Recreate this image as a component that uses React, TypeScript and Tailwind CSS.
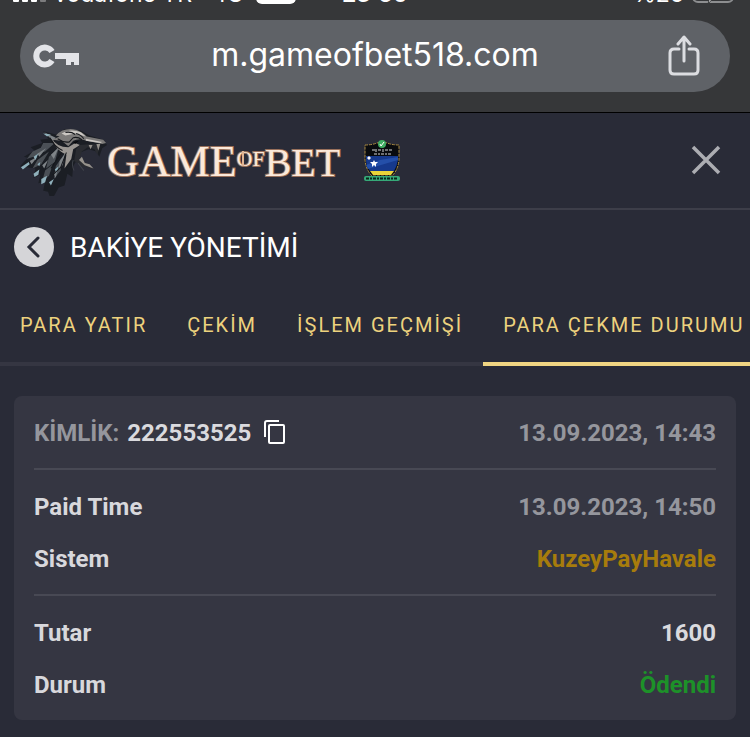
import React, { useState } from 'react';

const TABS = ['PARA YATIR', 'ÇEKİM', 'İŞLEM GEÇMİŞİ', 'PARA ÇEKME DURUMU'];

// Mostly scrolled out of view, only the bottom edge stays visible
const StatusBar: React.FC = () => (
  <div className="flex h-5 items-end overflow-hidden text-white font-['Inter','Liberation_Sans',sans-serif] text-[23px] leading-7">
    <div className="grid w-full grid-cols-[1fr_auto_1fr] items-end px-3 pb-3">
      <div className="flex items-end gap-2 whitespace-nowrap">
        <svg width="34" height="24" viewBox="0 0 34 24" fill="currentColor" className="mb-1">
          <rect x="1" y="14" width="6" height="8" rx="1" />
          <rect x="10" y="10" width="6" height="12" rx="1" />
          <rect x="19" y="5" width="6" height="17" rx="1" />
          <rect x="28" y="0" width="6" height="22" rx="1" opacity=".35" />
        </svg>
        <span>vodafone TR</span>
        <span className="pl-3">4G</span>
        <span className="ml-1 mb-1 h-6 w-10 rounded-md bg-white" />
      </div>
      <span className="font-semibold">23:50</span>
      <div className="flex items-end justify-end gap-2">
        <span>%26</span>
        <svg width="46" height="24" viewBox="0 0 46 24" fill="none" className="mb-1">
          <rect x="1" y="1" width="40" height="21" rx="5" stroke="#8d8e90" strokeWidth="2" />
          <path d="M22 0 12 13h7l-3 11 12-14h-7z" fill="#fff" stroke="#363739" />
        </svg>
      </div>
    </div>
  </div>
);

const WolfHead: React.FC = () => (
  <svg width="88" height="70" viewBox="2 2 91 66" preserveAspectRatio="none" fill="none">
    {/* Fur and skull base */}
    <path d="m2 40 8-8-4-1 11-6-4-3 12-4-2-3 8-1-5-7 13 3 9-5 16 1 10 5 14 4 4 5-5 3-3 8-3-5-8-2-9 3-2 5-5 8-1 10-5-3-3 11-6 2-6 10-2 2-3-8-5-1 2-9-7 2 2-8-7 3 2-9z" fill="#1b1e24" />
    <g fill="#4b5056">
      <path d="m15 26 12-5-8 9-10 3zM26 18l12 0-10 8-7 1zM20 34l12-8-8 12-9 4zM32 31l10-8-4 13-9 6zM28 44l8-6-4 11-7 5zM39 40l6-8-1 12-7 8z" />
    </g>
    <g fill="#7f8488">
      <path d="m27 8 12 5-3 3zM20 28l9-5-7 8zM34 29l8-7-5 11zM12 35l8-4-6 7zM43 35l6-8-3 12-4 3zM25 39l6-5-4 8zM37 47l4-5-2 9z" />
    </g>
    <g fill="#8fb0bb">
      <path d="m3 41 8-5 1 2-7 5zM16 31l5-3-3 6zM16 47l6-4-1 5-4 2zM24 52l6-3-2 6-4 2zM32 55l5-3-3 6zM38 43l4-3-2 6zM26 9l8 1-4 2zM20 38l3-2-1 4z" />
    </g>
    {/* Brow, muzzle and cheek */}
    <path d="M39 11q7-7 18-6 8 1 14 7l17 3 3 3-4 1-16-3q-8-3-14 0l-5 5-7-5-10-1 8-3z" fill="#7c7a79" />
    <path d="M45 9q9-5 20-1l5 4-11-3-10 2zM70 14l17 3-2 1-15-2z" fill="#cbc7c3" />
    <path d="M35 14q5 8 17 8l7-4 5 2-7 4-2 9-7 9 2-13q-10-3-15-15z" fill="#9a9692" />
    <path d="M41 14q6 4 12 3l4-4q5-1 9 2M33 13q4 8 13 12M50 27l-6 14-8 7M45 27 34 42M60 9q5 1 8 5M49 8q6-1 10 2" stroke="#15171b" />
    <path d="m57 17 6-1-4 3z" fill="#08090b" />
    {/* Open jaw */}
    <path d="m64 20 12-1 9 1-3 9-3-5-7-2-6 4-3 8 8 3 8 6-13-3-8-5 2-11z" fill="#2a2c31" />
    <path d="m73 20 2 4 2-4zm8-1 2 6 2-6zM66 31l3 6 5 1 4 4-9-3-6-5z" fill="#96928c" />
    <path d="M57 34q-2 5 1 10M62 37l6 7" stroke="#3f434a" />
  </svg>
);

const Logo: React.FC = () => (
  <a href="#" aria-label="Game of Bet" className="flex shrink-0 items-center">
    <WolfHead />
    <svg width="235" height="52" viewBox="0 0 235 52" fill="#fbe9da" stroke="#98705b" strokeWidth="2" paintOrder="stroke" fontFamily="'Liberation Serif', serif">
      <text x="-1" y="41" fontSize="44">
        GAME
        <tspan fontSize="22" dy="-10">OF</tspan>
        <tspan fontSize="40" dy="10">BET</tspan>
      </text>
      <path d="M135 16v15" stroke="#e0b594" />
    </svg>
  </a>
);

const LicenceBadge: React.FC = () => (
  <svg width="38" height="42" viewBox="0 0 38 42">
    <path d="M2 5q9 0 17-4 8 4 17 4v15q-1 10-7 16H9Q3 30 2 20z" fill="#090b0e" stroke="#a98a42" strokeDasharray="3 1" />
    <path d="M3 16h32v4q-1 6-4 11H7Q3 26 3 20z" fill="#16398d" />
    <path d="m3 25 14-5 18-3v3l-17 5-13 4z" fill="#244fa9" />
    <path d="M7 31h24l-3 4H10z" fill="#ead439" />
    <path d="m6 16 1 1 1 1-1 1-1 1-1-1-1-1 1-1zM11 20l1 2h3l-2 2v3l-2-2-2 2v-3l-2-2h3z" fill="#fff" />
    <circle cx="19" cy="4" r="4" fill="#3fac62" />
    <path d="m17 4 1 2 3-4" fill="none" stroke="#fff" />
    <path d="M9 10h3m1-1v3m2-2h3m2-1v3m2-2h3m1 0h3M11 14h3m2-1v2m2-1h3m2-1v2m2-1h3" stroke="#d4d5d6" />
    <rect x="1" y="36" width="36" height="5" rx="2" fill="#36a978" />
    <path d="M3 38.500h32" stroke="#07271a" strokeWidth="2" strokeDasharray="3 1 2 1" />
  </svg>
);

const Row: React.FC<{ label: string; value: string; tone: string }> = ({ label, value, tone }) => (
  <div className="flex h-[52px] items-center justify-between pt-[2px]">
    <dt className="text-[#d8d8dc]">{label}</dt>
    <dd className={tone}>{value}</dd>
  </div>
);

const App: React.FC = () => {
  const [active, setActive] = useState(3);

  return (
    <div className="min-h-screen overflow-hidden bg-[#292b37] font-['Roboto',sans-serif]">
      {/* Browser chrome */}
      <div className="border-b border-black bg-[#363739] pb-5">
        <StatusBar />
        <div className="mx-5 grid h-[72px] grid-cols-[1fr_auto_1fr] items-center rounded-full bg-[#5f6267] px-3">
          <button aria-label="Passwords" className="justify-self-start text-[#e3e4e8]">
            <svg width="48" height="26" viewBox="0 0 48 26" fill="none">
              <path d="M20 8.500a8.500 8.500 0 1 0 0 9" stroke="currentColor" strokeWidth="6" />
              <path d="M23 10h24v12h-5v-3h-3v3h-5v-6H23z" fill="currentColor" />
            </svg>
          </button>
          <span className="pb-[2px] font-['Inter','Liberation_Sans',sans-serif] text-[32px] leading-10 text-white">m.gameofbet518.com</span>
          <button aria-label="Share" className="justify-self-end px-4 text-[#dcdde1]">
            <svg width="34" height="42" viewBox="0 0 34 42" fill="none" stroke="currentColor" strokeWidth="3" strokeLinecap="round" strokeLinejoin="round">
              <path d="M11 14H6q-4 0-4 4v17q0 4 4 4h20q4 0 4-4V18q0-4-4-4h-5" />
              <path d="M16 26V3M10 9l6-7 6 7" />
            </svg>
          </button>
        </div>
      </div>

      <header className="flex h-[97px] items-center border-b-2 border-[#3d3e49] pr-7 pl-5">
        <Logo />
        <div className="ml-5"><LicenceBadge /></div>
        <button aria-label="Close" className="ml-auto">
          <svg width="32" height="32" viewBox="0 0 32 32" stroke="#acadb2" strokeWidth="3.500">
            <path d="m3 2 26 26M29 2 3 28" />
          </svg>
        </button>
      </header>

      <div className="flex h-[74px] items-center gap-4 px-[14px]">
        <button aria-label="Back" className="flex size-10 items-center justify-center rounded-full bg-[#d5d5d8]">
          <svg width="24" height="24" viewBox="0 0 24 24" fill="none" stroke="#292b37" strokeWidth="3" strokeLinecap="round">
            <path d="m16 3-9 9 9 9" />
          </svg>
        </button>
        <h1 className="pt-[2px] text-[28px] leading-8 text-white">BAKİYE YÖNETİMİ</h1>
      </div>

      <nav className="flex whitespace-nowrap text-xl tracking-[2px] text-[#edd27e]">
        {TABS.map((tab, i) => (
          <button
            key={tab}
            onClick={() => setActive(i)}
            className={`h-[82px] shrink-0 border-b-4 px-5 pt-1 ${i === active ? 'grow border-[#f0d582]' : 'border-[#353642]'}`}
          >
            {tab}
          </button>
        ))}
      </nav>

      <main className="mx-[14px] mt-[30px] rounded-lg bg-[#353642] px-5 text-2xl font-bold">
        <div className="flex h-[74px] items-center justify-between border-b-2 border-[#484954] pt-[2px] text-[#95969d]">
          <div className="flex items-center gap-2">
            <span>KİMLİK:</span>
            <span className="text-[#dadade]">222553525</span>
            <button aria-label="Copy" className="ml-1 text-white">
              <svg width="26" height="26" viewBox="0 0 26 26" fill="none" stroke="currentColor" strokeWidth="2">
                <path d="M2 17V3q0-2 2-2h12" />
                <rect x="6" y="5" width="15" height="18" rx="1" />
              </svg>
            </button>
          </div>
          <time>13.09.2023, 14:43</time>
        </div>
        <dl className="border-b-2 border-[#484954] py-[10px]">
          <Row label="Paid Time" value="13.09.2023, 14:50" tone="text-[#95969d]" />
          <Row label="Sistem" value="KuzeyPayHavale" tone="text-[#a77c0c]" />
        </dl>
        <dl className="py-[10px]">
          <Row label="Tutar" value="1600" tone="text-[#dadade]" />
          <Row label="Durum" value="Ödendi" tone="text-[#1d9129]" />
        </dl>
      </main>
    </div>
  );
};

export default App;
